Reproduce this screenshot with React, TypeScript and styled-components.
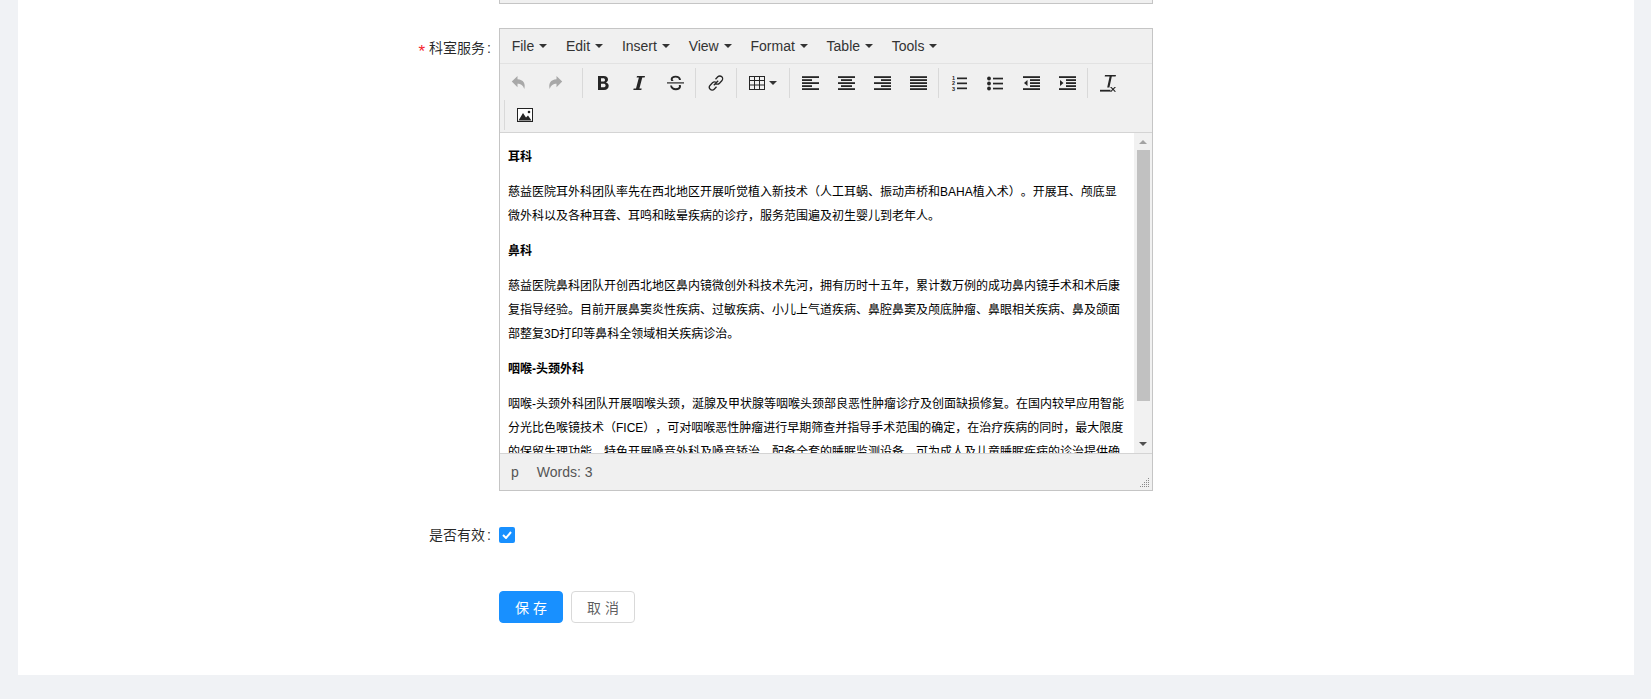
import React from "react";
import styled, { createGlobalStyle } from "styled-components";

const Global = createGlobalStyle`
  html, body { margin: 0; padding: 0; background: #f0f2f5; height: 699px; overflow: hidden; }
  * { box-sizing: border-box; }
`;

const Page = styled.div`
  height: 699px;
  padding: 0 17px 24px 18px;
  background: #f0f2f5;
  font-family: "Liberation Sans", "Noto Sans CJK SC", sans-serif;
`;
const Panel = styled.main`
  height: 675px;
  background: #fff;
  display: flex;
  flex-direction: column;
`;
const PrevField = styled.div`
  margin-left: 481px;
  width: 654px;
  height: 4px;
  background: #f0f0f0;
  border: 1px solid #c5c5c5;
  border-top: 0;
`;
const Row = styled.div<{ $top: number }>`
  display: flex;
  margin-top: ${(p) => p.$top}px;
`;
const Label = styled.label`
  width: 481px;
  text-align: right;
  font-size: 14px;
  line-height: 40px;
  height: 40px;
  color: rgba(0, 0, 0, 0.85);
  white-space: nowrap;
`;
const Colon = styled.span`
  margin: 0 8px 0 2px;
`;
const Star = styled.span`
  display: inline-block;
  width: 7px;
  margin-right: 4px;
  color: #f5222d;
  font-size: 17px;
  line-height: 1;
  vertical-align: -4px;
`;
const Editor = styled.div`
  width: 654px;
  height: 463px;
  border: 1px solid #c5c5c5;
  display: flex;
  flex-direction: column;
  background: #f0f0f0;
`;
const MenuBar = styled.div`
  height: 35px;
  display: flex;
  align-items: center;
  padding-left: 11.7px;
  gap: 18.75px;
  border-bottom: 1px solid #e2e2e2;
`;
const MenuItem = styled.span`
  font-size: 14px;
  color: #333;
  display: inline-flex;
  align-items: center;
  gap: 5px;
`;
const Caret = styled.i`
  width: 0;
  height: 0;
  border-left: 4px solid transparent;
  border-right: 4px solid transparent;
  border-top: 4px solid #333;
`;
const Toolbar = styled.div`
  height: 69px;
  padding-top: 4px;
  border-bottom: 1px solid #d4d4d4;
`;
const ToolRow = styled.div<{ $indent: number }>`
  height: 32px;
  display: flex;
  padding-left: ${(p) => p.$indent}px;
`;
const Group = styled.div<{ $first?: boolean }>`
  display: flex;
  height: 30px;
  padding: ${(p) => (p.$first ? "0 9px 0 0" : "0 2px")};
  border-left: ${(p) => (p.$first ? "0" : "1px solid #d9d9d9")};
`;
const Tool = styled.span<{ $off?: boolean; $wide?: boolean }>`
  width: ${(p) => (p.$wide ? 48 : 36)}px;
  height: 30px;
  display: flex;
  align-items: center;
  justify-content: center;
  gap: ${(p) => (p.$wide ? 4 : 0)}px;
  color: ${(p) => (p.$off ? "#a8a8a8" : "#262626")};
`;
const Content = styled.div`
  height: 321px;
  display: flex;
  background: #fff;
  border-bottom: 1px solid #d4d4d4;
  overflow: hidden;
`;
const Doc = styled.div`
  flex: 1;
  min-width: 0;
  overflow: hidden;
  padding: 12px 8px 0 8px;
  font-family: "Liberation Sans", "Noto Sans CJK SC", sans-serif;
  font-size: 12px;
  line-height: 24px;
  color: #000;
  text-spacing-trim: space-all;
`;
const Para = styled.p`
  margin: 0 0 11px;
`;
const Heading = styled.p`
  margin: 0 0 11px;
  font-weight: 700;
`;
const Scroll = styled.div`
  width: 18px;
  background: #f1f1f1;
  display: flex;
  flex-direction: column;
  align-items: center;
  position: relative;
`;
const Arrow = styled.i<{ $down?: boolean }>`
  position: absolute;
  left: 5px;
  ${(p) => (p.$down ? "bottom: 7px;" : "top: 7px;")}
  border-left: 4px solid transparent;
  border-right: 4px solid transparent;
  ${(p) => (p.$down ? "border-top: 4px solid #505050;" : "border-bottom: 4px solid #a3a3a3;")}
`;
const Thumb = styled.div`
  width: 13px;
  height: 251px;
  margin-top: 17px;
  background: #c1c1c1;
`;
const StatusBar = styled.div`
  flex: 1;
  display: flex;
  align-items: center;
  padding-left: 11px;
  gap: 18px;
  font-size: 14px;
  color: #555;
  position: relative;
`;
const Grip = styled.svg`
  position: absolute;
  right: 2px;
  bottom: 2px;
`;
const CheckBox = styled.span`
  width: 16px;
  height: 16px;
  margin-top: 12px;
  border-radius: 2px;
  background: #1890ff;
  display: flex;
  align-items: center;
  justify-content: center;
`;
const Buttons = styled.div`
  margin: 36px 0 0 481px;
  display: flex;
  gap: 8px;
`;
const Button = styled.button<{ $primary?: boolean }>`
  height: 32px;
  width: 64px;
  padding: 0;
  border-radius: 4px;
  font-family: "Liberation Sans", "Noto Sans CJK SC", sans-serif;
  font-size: 14px;
  border: 1px solid ${(p) => (p.$primary ? "#1890ff" : "#d9d9d9")};
  background: ${(p) => (p.$primary ? "#1890ff" : "#fff")};
  color: ${(p) => (p.$primary ? "#fff" : "rgba(0,0,0,0.65)")};
`;
const Tiny = styled.text`
  font-family: "Liberation Sans", sans-serif;
  font-size: 5.5px;
  font-weight: 700;
`;

const Svg: React.FC<{ w?: number; h?: number; children: React.ReactNode }> = ({ w = 16, h = 16, children }) => (
  <svg width={w} height={h} viewBox={`0 0 ${w} ${h}`} fill="currentColor">{children}</svg>
);

const Lines: React.FC<{ rows: [number, number][] }> = ({ rows }) => (
  <Svg w={17} h={14}>
    {rows.map(([x, w], i) => <rect key={i} x={x} y={i * 3 + 0.2} width={w} height={1.8} />)}
  </Svg>
);

const icons = {
  undo: <Svg><path d="M6.500 1 .8 6.600l5.700 5.600V8.800c3.400 0 5.500 1.400 6.800 5.200 1.500-5.400-.8-9.400-6.800-9.800z" /></Svg>,
  redo: <Svg><path d="M9.500 1l5.700 5.600-5.700 5.600V8.800c-3.400 0-5.500 1.400-6.800 5.200-1.500-5.400.8-9.400 6.800-9.800z" /></Svg>,
  bold: <Svg><path fillRule="evenodd" d="M3 1h5.800c2.700 0 4.200 1.300 4.200 3.400 0 1.400-.8 2.500-2.100 3 1.800.4 2.800 1.700 2.800 3.400 0 2.400-1.700 4.200-4.600 4.200H3zm3 2.300v3.200h2.100c1.200 0 1.900-.6 1.900-1.600s-.7-1.600-1.900-1.600zm0 5.400v3.500h2.400c1.400 0 2.200-.7 2.200-1.800s-.8-1.700-2.200-1.700z" /></Svg>,
  italic: <Svg><path d="M6 1h8l-.4 1.500h-2.300L8.400 13.500h2.300l-.4 1.500H2.300l.4-1.500H5L7.900 2.500H5.600z" /></Svg>,
  strike: <Svg w={17}><path d="M0 7.300h17v1.200H0z" /><path d="M12 5c-.3-1.600-1.500-2.400-3.400-2.400-1.800 0-2.900.7-2.900 1.800 0 .7.300 1.100 1 1.500H4.300C3.900 5.400 3.700 4.900 3.700 4.300 3.700 2.200 5.700.8 8.600.8c3 0 5 1.400 5.400 4.200zM5 10.500c.3 1.800 1.700 2.800 3.800 2.800 1.900 0 3.200-.8 3.200-2 0-.5-.1-.8-.4-1.200h2.100c.2.400.3.900.3 1.400 0 2.300-2.100 3.700-5.100 3.700-3.200 0-5.400-1.600-5.800-4.700z" /></Svg>,
  link: <Svg><path fill="none" stroke="currentColor" strokeWidth="1.300" d="M5.800 10.200l4.400-4.400M7.500 4.200l2.300-2.400c1.100-1.100 2.900-1.100 4 0s1.100 2.900 0 4l-2.300 2.400c-1.100 1.100-2.700 1.100-3.800.2M8.500 11.800l-2.300 2.400c-1.100 1.100-2.900 1.100-4 0s-1.100-2.900 0-4l2.300-2.400c1.100-1.100 2.700-1.100 3.800-.2" /></Svg>,
  table: (
    <Svg w={16} h={14}>
      <path fillRule="evenodd" d="M0 0h16v14H0zM1 1v3h4V1zm5 0v3h4V1zm5 0v3h4V1zM1 5v3.500h4V5zm5 0v3.500h4V5zm5 0v3.500h4V5zM1 9.500V13h4V9.500zm5 0V13h4V9.500zm5 0V13h4V9.500z" />
    </Svg>
  ),
  ol: (
    <Svg w={16} h={16}>
      <rect x="6" y="2.500" width="10" height="1.700" /><rect x="6" y="7.500" width="10" height="1.700" /><rect x="6" y="12.500" width="10" height="1.700" />
      <Tiny x="1" y="5">1</Tiny><Tiny x="1" y="10.200">2</Tiny><Tiny x="1" y="15.500">3</Tiny>
    </Svg>
  ),
  ul: (
    <Svg w={16} h={15}>
      <circle cx="2" cy="2.500" r="1.900" /><circle cx="2" cy="7.500" r="1.900" /><circle cx="2" cy="12.500" r="1.900" />
      <rect x="6" y="1.700" width="10" height="1.700" /><rect x="6" y="6.700" width="10" height="1.700" /><rect x="6" y="11.700" width="10" height="1.700" />
    </Svg>
  ),
  outdent: (
    <Svg w={17} h={14}>
      <rect x="0" y="0.200" width="17" height="1.800" /><rect x="7" y="3.200" width="10" height="1.800" /><rect x="7" y="6.200" width="10" height="1.800" /><rect x="7" y="9.200" width="10" height="1.800" /><rect x="0" y="12.200" width="17" height="1.800" />
      <path d="M4.500 4v6L1 7z" />
    </Svg>
  ),
  indent: (
    <Svg w={17} h={14}>
      <rect x="0" y="0.200" width="17" height="1.800" /><rect x="7" y="3.200" width="10" height="1.800" /><rect x="7" y="6.200" width="10" height="1.800" /><rect x="7" y="9.200" width="10" height="1.800" /><rect x="0" y="12.200" width="17" height="1.800" />
      <path d="M1 4v6l3.500-3z" />
    </Svg>
  ),
  clear: (
    <Svg w={17} h={17}>
      <path d="M5 0h11l-.4 1.600h-3.800L9.400 12.500H7.200L9.600 1.600H4.700z" />
      <rect x="0" y="14.800" width="10.500" height="1.800" />
      <path d="M11.500 12l1.500 1.600 1.500-1.600H16l-2.200 2.300 2.200 2.500h-1.500L13 15.100l-1.500 1.700H10l2.200-2.500-2.200-2.300z" />
    </Svg>
  ),
  image: (
    <Svg w={16} h={14}>
      <rect x="0.500" y="0.500" width="15" height="13" fill="#fff" stroke="#222" />
      <path d="M1.500 12.500 6 5l3 4.500 2-2 3.500 5z" />
      <circle cx="12" cy="4" r="1.300" />
    </Svg>
  ),
};

const menus = ["File", "Edit", "Insert", "View", "Format", "Table", "Tools"];

export default function App() {
  return (
    <Page>
      <Global />
      <Panel>
        <PrevField />
        <Row $top={24}>
          <Label><Star>*</Star>科室服务<Colon>:</Colon></Label>
          <Editor>
            <MenuBar>
              {menus.map((m) => <MenuItem key={m}>{m}<Caret /></MenuItem>)}
            </MenuBar>
            <Toolbar>
              <ToolRow $indent={1}>
                <Group $first>
                  <Tool $off>{icons.undo}</Tool>
                  <Tool $off>{icons.redo}</Tool>
                </Group>
                <Group>
                  <Tool>{icons.bold}</Tool>
                  <Tool>{icons.italic}</Tool>
                  <Tool>{icons.strike}</Tool>
                </Group>
                <Group><Tool>{icons.link}</Tool></Group>
                <Group><Tool $wide>{icons.table}<Caret /></Tool></Group>
                <Group>
                  <Tool><Lines rows={[[0, 17], [0, 10], [0, 17], [0, 10], [0, 17]]} /></Tool>
                  <Tool><Lines rows={[[0, 17], [3, 11], [0, 17], [3, 11], [0, 17]]} /></Tool>
                  <Tool><Lines rows={[[0, 17], [7, 10], [0, 17], [7, 10], [0, 17]]} /></Tool>
                  <Tool><Lines rows={[[0, 17], [0, 17], [0, 17], [0, 17], [0, 17]]} /></Tool>
                </Group>
                <Group>
                  <Tool>{icons.ol}</Tool>
                  <Tool>{icons.ul}</Tool>
                  <Tool>{icons.outdent}</Tool>
                  <Tool>{icons.indent}</Tool>
                </Group>
                <Group><Tool>{icons.clear}</Tool></Group>
              </ToolRow>
              <ToolRow $indent={4}>
                <Group><Tool>{icons.image}</Tool></Group>
              </ToolRow>
            </Toolbar>
            <Content>
              <Doc>
                <Heading>耳科</Heading>
                <Para>慈益医院耳外科团队率先在西北地区开展听觉植入新技术（人工耳蜗、振动声桥和BAHA植入术）。开展耳、颅底显微外科以及各种耳聋、耳鸣和眩晕疾病的诊疗，服务范围遍及初生婴儿到老年人。</Para>
                <Heading>鼻科</Heading>
                <Para>慈益医院鼻科团队开创西北地区鼻内镜微创外科技术先河，拥有历时十五年，累计数万例的成功鼻内镜手术和术后康复指导经验。目前开展鼻窦炎性疾病、过敏疾病、小儿上气道疾病、鼻腔鼻窦及颅底肿瘤、鼻眼相关疾病、鼻及颌面部整复3D打印等鼻科全领域相关疾病诊治。</Para>
                <Heading>咽喉-头颈外科</Heading>
                <Para>咽喉-头颈外科团队开展咽喉头颈，涎腺及甲状腺等咽喉头颈部良恶性肿瘤诊疗及创面缺损修复。在国内较早应用智能分光比色喉镜技术（FICE），可对咽喉恶性肿瘤进行早期筛查并指导手术范围的确定，在治疗疾病的同时，最大限度的保留生理功能。特色开展嗓音外科及嗓音矫治。配备全套的睡眠监测设备，可为成人及儿童睡眠疾病的诊治提供确切依据。</Para>
              </Doc>
              <Scroll>
                <Arrow />
                <Thumb />
                <Arrow $down />
              </Scroll>
            </Content>
            <StatusBar>
              <span>p</span>
              <span>Words: 3</span>
              <Grip width="10" height="10" viewBox="0 0 10 10" fill="#8a8a8a">
                {[[8, 0], [6, 2], [8, 2], [4, 4], [6, 4], [8, 4], [2, 6], [4, 6], [6, 6], [8, 6], [0, 8], [2, 8], [4, 8], [6, 8], [8, 8]].map(([x, y]) => (
                  <rect key={`${x}-${y}`} x={x} y={y} width="1" height="1" />
                ))}
              </Grip>
            </StatusBar>
          </Editor>
        </Row>
        <Row $top={24}>
          <Label>是否有效<Colon>:</Colon></Label>
          <CheckBox>
            <svg width="10" height="8" viewBox="0 0 10 8" fill="none" stroke="#fff" strokeWidth="2"><path d="M1 4l3 3 5-6" /></svg>
          </CheckBox>
        </Row>
        <Buttons>
          <Button $primary>保 存</Button>
          <Button>取 消</Button>
        </Buttons>
      </Panel>
    </Page>
  );
}
